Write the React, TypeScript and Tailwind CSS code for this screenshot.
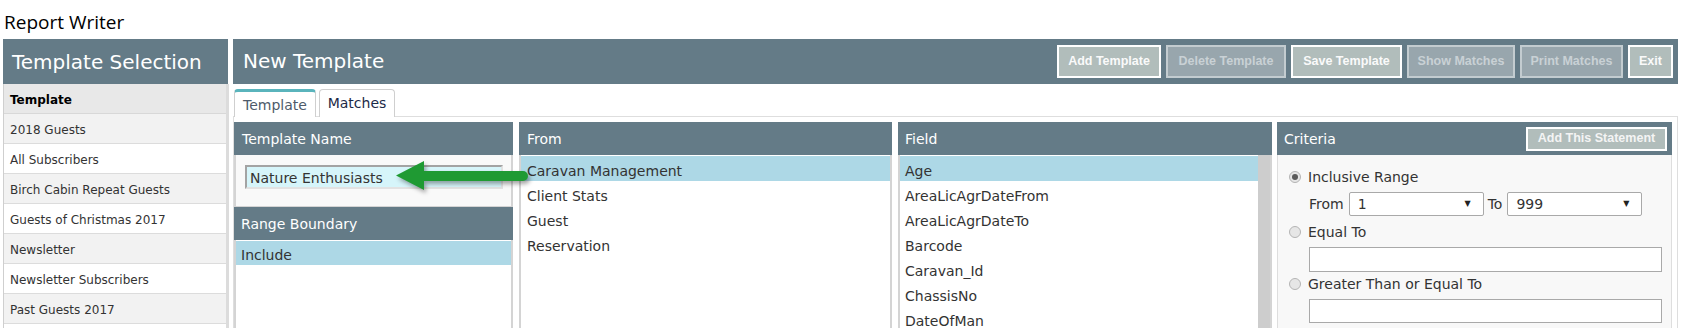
import clsx from "clsx";

const TEMPLATES = [
  "2018 Guests",
  "All Subscribers",
  "Birch Cabin Repeat Guests",
  "Guests of Christmas 2017",
  "Newsletter",
  "Newsletter Subscribers",
  "Past Guests 2017",
];

const SOURCES = ["Caravan Management", "Client Stats", "Guest", "Reservation"];

const FIELDS = [
  "Age",
  "AreaLicAgrDateFrom",
  "AreaLicAgrDateTo",
  "Barcode",
  "Caravan_Id",
  "ChassisNo",
  "DateOfMan",
];

const BUTTONS = [
  { label: "Add Template", enabled: true, w: "w-[104px]" },
  { label: "Delete Template", enabled: false, w: "w-[120px]" },
  { label: "Save Template", enabled: true, w: "w-[111px]" },
  { label: "Show Matches", enabled: false, w: "w-[108px]" },
  { label: "Print Matches", enabled: false, w: "w-[103px]" },
  { label: "Exit", enabled: true, w: "w-[45px]" },
];

function Radio({ checked }: { checked?: boolean }) {
  return (
    <span className="w-[12px] h-[12px] rounded-full border border-[#b4b4b4] bg-[#e6e6e6] flex items-center justify-center shrink-0">
      {checked && <span className="w-[6px] h-[6px] rounded-full bg-[#5a5a5a]" />}
    </span>
  );
}

function FakeSelect({ value }: { value: string }) {
  return (
    <div className="w-[135px] h-[24px] bg-white border border-[#a9a9a9] rounded-[2px] flex items-center justify-between pl-[8px] pr-[12px]">
      <span>{value}</span>
      <span className="text-[8px] text-[#222]">▼</span>
    </div>
  );
}

function PanelHeader({ title, pad }: { title: string; pad: string }) {
  return (
    <div className={clsx("h-[33px] bg-[#647b87] text-white text-[14px] flex items-center shrink-0 pt-px", pad)}>
      {title}
    </div>
  );
}

export default function App() {
  return (
    <div className="w-[1683px] h-[328px] overflow-hidden bg-white relative font-['DejaVu_Sans',sans-serif] text-[#333]">
      {/* Page title */}
      <div className="h-[39px] pl-[4px] pt-[11px] text-[19px] leading-[22px] text-black font-['Open_Sans',sans-serif]">
        Report Writer
      </div>

      <div className="flex items-start">
        {/* Template selection */}
        <div className="ml-[3px] w-[226px] shrink-0">
          <div className="h-[45px] w-[225px] bg-[#647b87] text-white text-[20px] pl-[9px] flex items-center">
            Template Selection
          </div>
          <div className="border-l border-[#cfcfcf] border-r-[3px] border-r-[#dcdcdc]">
            <div className="h-[30px] bg-[#e8e8e8] border-b border-[#d8d8d8] px-[6px] pt-[2px] flex items-center text-[12px] font-bold text-black">
              Template
            </div>
            {TEMPLATES.map((t, i) => (
              <div
                key={t}
                className={clsx(
                  "h-[30px] border-b border-[#dcdcdc] px-[6px] pt-[2px] flex items-center text-[12px]",
                  i % 2 === 0 ? "bg-[#f2f2f2]" : "bg-white"
                )}
              >
                {t}
              </div>
            ))}
            <div className="h-[30px] bg-white" />
          </div>
        </div>

        {/* Editor */}
        <div className="ml-[4px] flex flex-col">
          <div className="h-[45px] w-[1445px] bg-[#647b87] flex items-center justify-between pl-[10px] pr-[5px]">
            <span className="text-white text-[20px] -mt-[2px]">New Template</span>
            <div className="flex gap-[5px]">
              {BUTTONS.map((b) => (
                <button
                  key={b.label}
                  className={clsx(
                    "h-[33px] border-2 font-['Liberation_Sans',sans-serif] font-bold text-[12.5px] whitespace-nowrap",
                    b.w,
                    b.enabled
                      ? "bg-[#b1bdbb] border-white text-[#fafafa]"
                      : "bg-[#98a6ad] border-[#c3ccd0] text-[#c9d1d5]"
                  )}
                >
                  {b.label}
                </button>
              ))}
            </div>
          </div>

          {/* Tabs */}
          <div className="mt-[5px] ml-[1px] flex gap-[3px] h-[28px] relative z-10">
            <div className="w-[82px] h-[28px] bg-white border-x border-[#cfcfcf] border-t-[3px] border-t-[#5ab4bc] rounded-t-[4px] text-[14px] text-[#4e5b6a] flex items-center justify-center pt-[2px]">
              Template
            </div>
            <div className="w-[76px] h-[28px] bg-white border border-b-0 border-[#cfcfcf] rounded-t-[4px] text-[14px] text-[#1c2a48] flex items-center justify-center">
              Matches
            </div>
          </div>

          {/* Tab body */}
          <div className="-mt-px w-[1445px] h-[230px] border border-[#dedede] pt-[5px] pr-[5px] flex">
            {/* Template name + range boundary */}
            <div className="w-[279px] flex flex-col">
              <PanelHeader title="Template Name" pad="pl-[8px]" />
              <div className="h-[52px] bg-[#f9f9f9] border-x-2 border-b border-[#d4d4d4] pt-[10px] pl-[9px]">
                <div className="w-[258px] h-[24px] bg-[#d6f5fa] border-2 border-t-[#a3a3a3] border-l-[#a3a3a3] border-r-[#e2e2e2] border-b-[#e2e2e2] text-[14px] pl-[3px] pt-[3px] flex items-center">
                  Nature Enthusiasts
                </div>
              </div>
              <PanelHeader title="Range Boundary" pad="pl-[7px]" />
              <div className="flex-1 border-x-2 border-[#d4d4d4] pt-px">
                <div className="h-[24px] bg-[#add8e6] px-[5px] pt-[4px] flex items-center text-[14px]">Include</div>
              </div>
            </div>

            {/* From */}
            <div className="ml-[6px] w-[373px] flex flex-col">
              <PanelHeader title="From" pad="pl-[8px]" />
              <div className="flex-1 border-x-2 border-[#d4d4d4] bg-white pt-px">
                {SOURCES.map((s, i) => (
                  <div
                    key={s}
                    className={clsx(
                      "h-[25px] px-[6px] pt-[5px] flex items-center text-[14px]",
                      i === 0 && "bg-[#add8e6]"
                    )}
                  >
                    {s}
                  </div>
                ))}
              </div>
            </div>

            {/* Field */}
            <div className="ml-[6px] w-[374px] flex flex-col">
              <PanelHeader title="Field" pad="pl-[7px]" />
              <div className="flex-1 border-x-2 border-[#d4d4d4] bg-white flex">
                <div className="flex-1 pt-px">
                  {FIELDS.map((f, i) => (
                    <div
                      key={f}
                      className={clsx(
                        "h-[25px] px-[5px] pt-[5px] flex items-center text-[14px]",
                        i === 0 && "bg-[#add8e6]"
                      )}
                    >
                      {f}
                    </div>
                  ))}
                </div>
                <div className="w-[12px] bg-[#cdcdcd]" />
              </div>
            </div>

            {/* Criteria */}
            <div className="ml-[5px] w-[395px] flex flex-col">
              <div className="h-[33px] bg-[#647b87] flex items-center justify-between pl-[7px] pr-[5px] shrink-0">
                <span className="text-white text-[14px] pt-[2px]">Criteria</span>
                <button className="h-[24px] w-[141px] bg-[#b1bdbb] border-2 border-white text-[#f4f4f4] font-['Liberation_Sans',sans-serif] font-bold text-[12.5px]">
                  Add This Statement
                </button>
              </div>
              <div className="flex-1 bg-[#f8f8f8] border-x border-[#dedede] text-[14px]">
                <div className="mt-[12px] h-[20px] pl-[11px] flex items-center gap-[7px]">
                  <Radio checked />
                  <span>Inclusive Range</span>
                </div>
                <div className="mt-[5px] pl-[31px] flex items-center">
                  <span className="mr-[5px]">From</span>
                  <FakeSelect value="1" />
                  <span className="ml-[4px] mr-[5px]">To</span>
                  <FakeSelect value="999" />
                </div>
                <div className="mt-[6px] h-[20px] pl-[11px] flex items-center gap-[7px]">
                  <Radio />
                  <span>Equal To</span>
                </div>
                <div className="mt-[5px] ml-[31px] w-[353px] h-[25px] bg-white border border-[#a9a9a9]" />
                <div className="mt-[2px] h-[20px] pl-[11px] flex items-center gap-[7px]">
                  <Radio />
                  <span>Greater Than or Equal To</span>
                </div>
                <div className="mt-[5px] ml-[31px] w-[353px] h-[24px] bg-white border border-[#a9a9a9]" />
              </div>
            </div>
          </div>
        </div>
      </div>

      {/* Callout arrow */}
      <svg
        className="absolute left-[390px] top-[155px] drop-shadow-[2px_3px_2px_rgba(0,0,0,0.35)]"
        width="145"
        height="42"
        viewBox="390 155 145 42"
      >
        <path d="M396 175.5 L424 161 L424 171 L523 171 A5 5 0 0 1 523 181 L424 181 L424 190 Z" fill="#1f9a33" />
      </svg>
    </div>
  );
}
